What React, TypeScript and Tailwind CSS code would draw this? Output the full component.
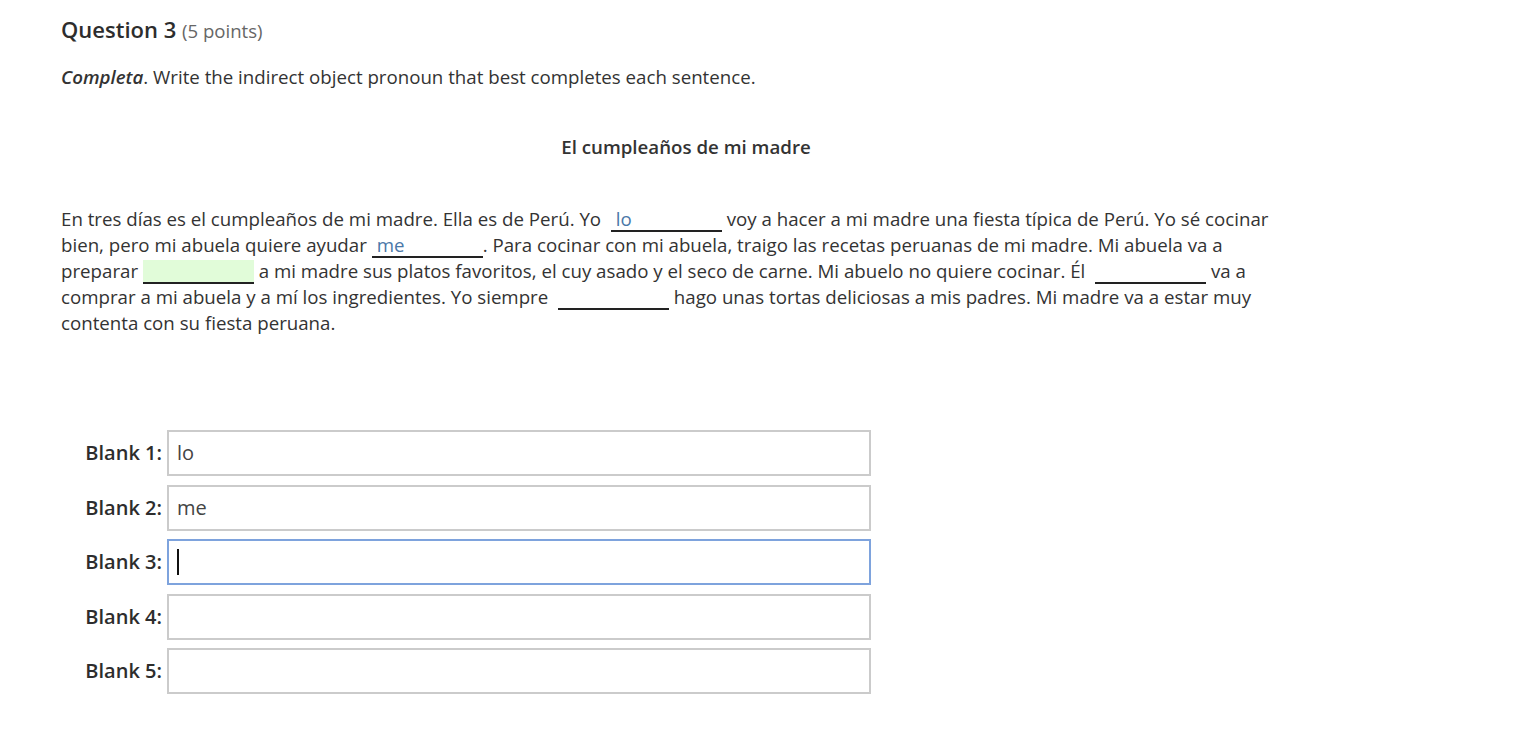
import { FC } from "react";

const Blank: FC<{ value?: string; active?: boolean }> = ({ value, active }) => (
    <span
        className={`inline-block w-[111px] leading-[22px] pl-[5px] border-b-2 border-[#222] text-[#4a77a8] ${active ? "bg-[#e1fcd9]" : ""}`}
    >
        {value || "\u00a0"}
    </span>
);

const fields = [
    { label: "Blank 1:", value: "lo" },
    { label: "Blank 2:", value: "me" },
    { label: "Blank 3:", value: "", focus: true },
    { label: "Blank 4:", value: "" },
    { label: "Blank 5:", value: "" },
];

export default function App() {
    return (
        <div className="min-h-[732px] bg-white text-[#333] font-['Open_Sans',sans-serif] pl-[61px] pr-[216px] pt-[14px]">
            <h2 className="text-[22px] leading-[30px] font-semibold text-[#2d2d2d]">
                Question 3 <span className="text-[18.6px] font-normal text-[#666]">(5 points)</span>
            </h2>

            <p className="mt-[18px] text-[18.7px] leading-[26px]">
                <em className="font-semibold">Completa</em>. Write the indirect object pronoun that best completes each sentence.
            </p>

            <p className="mt-[44px] text-center text-[18.7px] font-semibold leading-[26px]">El cumpleaños de mi madre</p>

            <p className="mt-[46px] text-[18.7px] leading-[26px] pr-[20px]">
                En tres días es el cumpleaños de mi madre. Ella es de Perú. Yo{"\u00a0 "}
                <Blank value="lo" /> voy a hacer a mi madre una fiesta típica de Perú. Yo sé cocinar bien, pero mi abuela quiere ayudar{" "}
                <Blank value="me" />. Para cocinar con mi abuela, traigo las recetas peruanas de mi madre. Mi abuela va a preparar{" "}
                <Blank active /> a mi madre sus platos favoritos, el cuy asado y el seco de carne. Mi abuelo no quiere cocinar. Él{"\u00a0 "}
                <Blank /> va a comprar a mi abuela y a mí los ingredientes. Yo siempre{"\u00a0 "}
                <Blank /> hago unas tortas deliciosas a mis padres. Mi madre va a estar muy contenta con su fiesta peruana.
            </p>

            <div className="mt-[94px] flex flex-col gap-[8.5px] w-[810px] pl-[23px]">
                {fields.map((f) => (
                    <div key={f.label} className="flex items-center gap-[5px]">
                        <span className="text-[20px] font-semibold text-[#2d2d2d] w-[78px] text-right whitespace-nowrap">{f.label}</span>
                        <div
                            className={`flex-1 h-[46px] border-2 flex items-center px-[8px] text-[20px] text-[#444] ${f.focus ? "border-[#7ea3dd]" : "border-[#cbcbcb]"}`}
                        >
                            {f.value}
                            {f.focus && <span className="inline-block w-[2px] h-[26px] bg-[#111]" />}
                        </div>
                    </div>
                ))}
            </div>
        </div>
    );
}
